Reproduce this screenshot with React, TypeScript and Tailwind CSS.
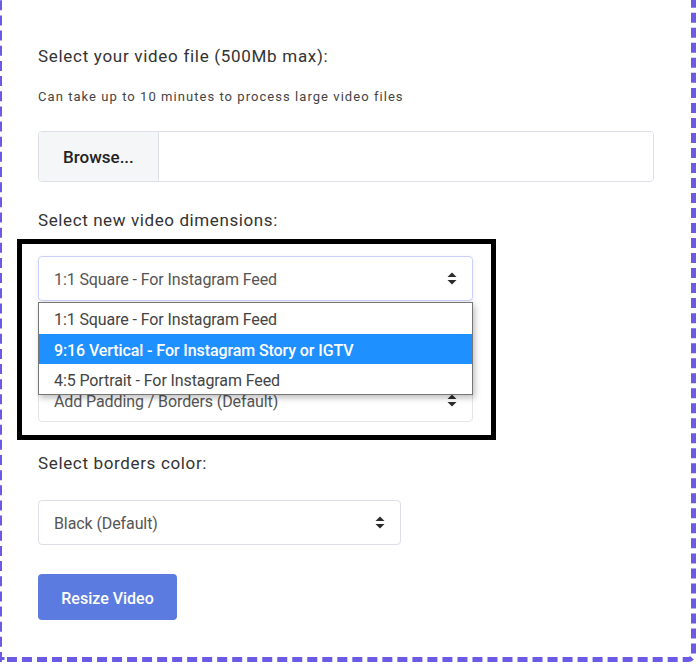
import React from "react";

const FONT = "font-['Roboto','Liberation_Sans',sans-serif]";

function Arrows() {
  return (
    <svg width="10" height="13" viewBox="0 0 10 13" className="shrink-0">
      <path d="M5 0.5 L9.5 5 L0.5 5 Z" fill="#2b2b2b" />
      <path d="M0.5 8 L9.5 8 L5 12.5 Z" fill="#2b2b2b" />
    </svg>
  );
}

function Select({ text, className }: { text: string; className: string }) {
  return (
    <div className={`flex items-center justify-between rounded-[4px] bg-white pl-[15px] pr-[15px] ${className}`}>
      <span className="text-[16px] tracking-[-0.1px] text-[#555] pt-[3px]">{text}</span>
      <Arrows />
    </div>
  );
}

export default function App() {
  return (
    <div className={`w-[700px] h-[666px] overflow-hidden bg-white ${FONT}`}>
      <div className="ml-[-3px] mt-[-30px] w-[699px] h-[692px] border-[5px] border-dashed border-[#6a5ae6] rounded-br-[8px] pl-[36px] pt-[70px]">
        <div className="w-[616px] flex flex-col">
          <div className="h-[24px] flex items-center text-[17px] tracking-[0.7px] text-[#333]">
            Select your video file (500Mb max):
          </div>
          <div className="mt-[18px] h-[20px] flex items-center text-[13px] tracking-[1.05px] text-[#444]">
            Can take up to 10 minutes to process large video files
          </div>
          <div className="mt-[24px] h-[51px] flex rounded-[4px] border border-[#dcdfe5] overflow-hidden">
            <div className="w-[120px] bg-[#f5f6f8] border-r border-[#dcdfe5] flex items-center pl-[24px] pt-[2px] text-[17px] font-medium text-[#222]">
              Browse...
            </div>
            <div className="flex-1 bg-white" />
          </div>
          <div className="mt-[27px] h-[24px] flex items-center text-[17px] tracking-[0.6px] text-[#333]">
            Select new video dimensions:
          </div>
          <div className="relative mt-[6px] ml-[-21px] w-[479px] h-[201px] border-[5px] border-black pl-[16px] pr-[18px] pt-[12px]">
            <Select text="1:1 Square - For Instagram Feed" className="h-[45px] border border-[#c9d1f7] shadow-[0_2px_6px_rgba(0,0,0,0.08)]" />
            <div className="h-[77px]" />
            <Select text="Add Padding / Borders (Default)" className="h-[44px] border border-[#e2e4e8]" />
            <div className="absolute left-[16px] top-[58px] w-[435px] border border-[#767676] bg-white shadow-[2px_3px_6px_rgba(0,0,0,0.25)] text-[16px] tracking-[-0.1px]">
              <div className="h-[31px] flex items-center pl-[15px] pt-[3px] text-[#444]">1:1 Square - For Instagram Feed</div>
              <div className="h-[30px] flex items-center pl-[15px] pt-[3px] bg-[#1e90ff] text-white font-medium">9:16 Vertical - For Instagram Story or IGTV</div>
              <div className="h-[30px] flex items-center pl-[15px] pt-[3px] text-[#444]">4:5 Portrait - For Instagram Feed</div>
            </div>
          </div>
          <div className="mt-[12px] h-[24px] flex items-center text-[17px] tracking-[0.65px] text-[#333]">
            Select borders color:
          </div>
          <Select text="Black (Default)" className="mt-[24px] w-[363px] h-[45px] border border-[#dcdfe5]" />
          <button className="mt-[29px] w-[139px] h-[46px] rounded-[4px] bg-[#5b7be0] pt-[3px] text-white text-[16px] font-medium">
            Resize Video
          </button>
        </div>
      </div>
    </div>
  );
}
